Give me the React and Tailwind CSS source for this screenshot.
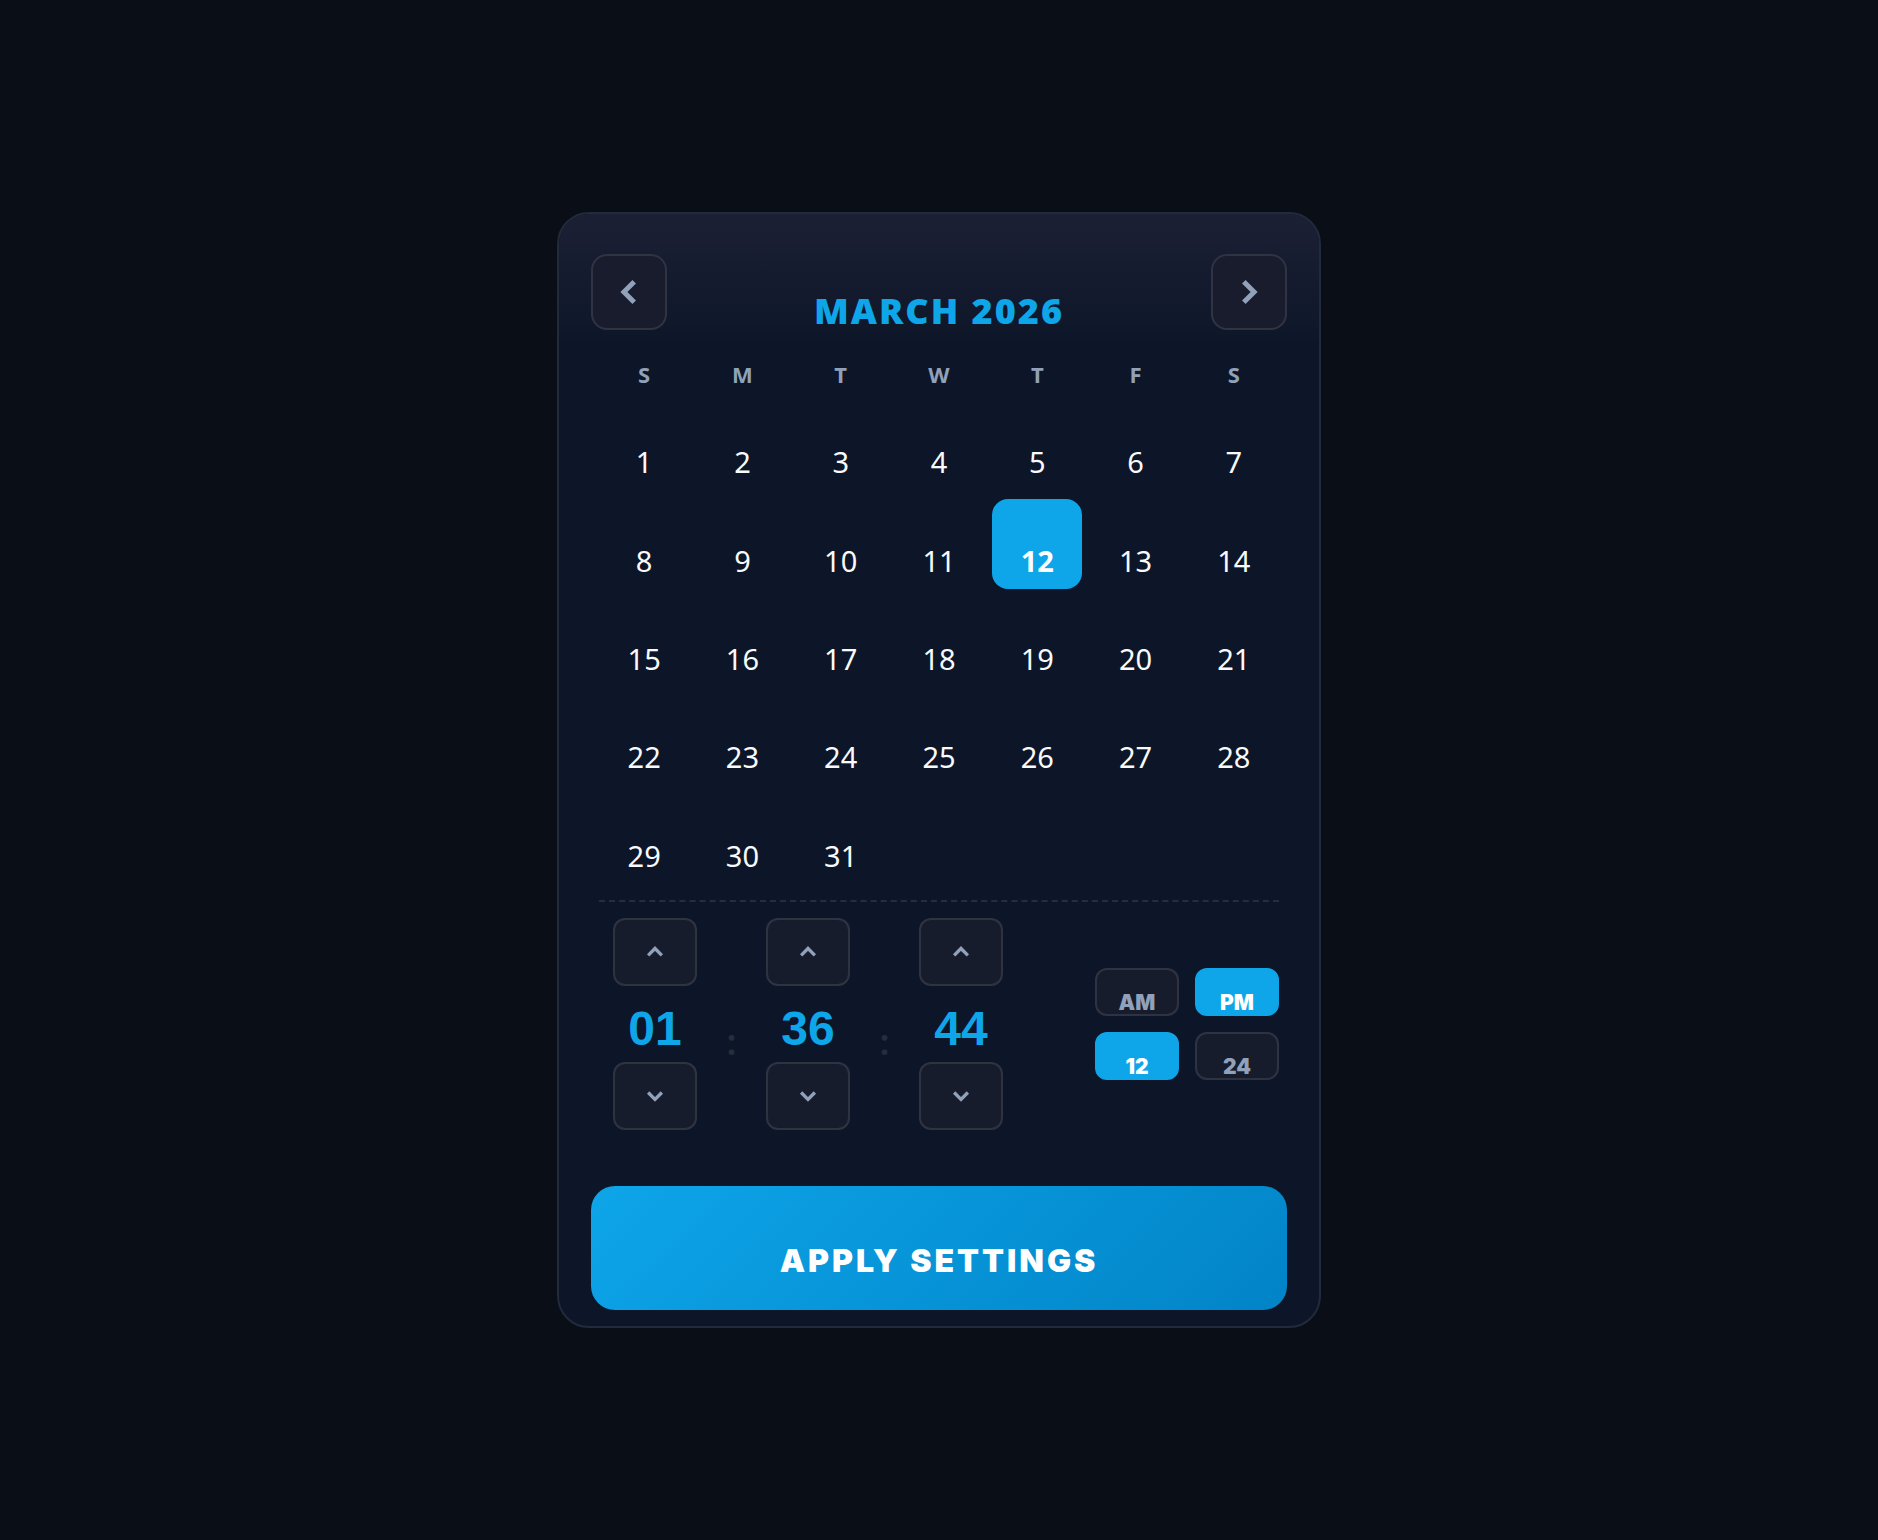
import { useState } from "react";

const WEEKDAYS = ["S", "M", "T", "W", "T", "F", "S"];
const DAYS = Array.from({ length: 31 }, (_, i) => i + 1);

const ICONS = {
  left: "M14.6 6.85L9.45 12l5.15 5.15",
  right: "M9.4 6.85L14.55 12 9.4 17.15",
  up: "M6.85 14.5L12 9.35l5.15 5.15",
  down: "M6.85 9.4L12 14.55l5.15-5.15",
};

function Icon({ name, className }) {
  return (
    <svg
      viewBox="0 0 24 24"
      fill="none"
      stroke="currentColor"
      strokeWidth="2.5"
      aria-hidden="true"
      className={className}
    >
      <path d={ICONS[name]} />
    </svg>
  );
}

function NavButton({ icon, label }) {
  return (
    <button
      type="button"
      aria-label={label}
      className="flex size-[76px] shrink-0 items-center justify-center rounded-2xl border-2 border-white/10 bg-[#181c2d] text-slate-400"
    >
      <Icon name={icon} className="size-12" />
    </button>
  );
}

function StepButton({ icon, label }) {
  return (
    <button
      type="button"
      aria-label={label}
      className="flex h-[68px] w-full items-center justify-center rounded-xl border-2 border-white/10 bg-[#171c2c] text-slate-400"
    >
      <Icon name={icon} className="size-8" />
    </button>
  );
}

function TimeColumn({ value, unit }) {
  return (
    <div className="flex w-[84px] flex-col items-center">
      <StepButton icon="up" label={`Increase ${unit}`} />
      <output
        aria-label={unit}
        className="flex h-[76px] items-center pt-2.5 font-['Liberation_Sans',Arial,sans-serif] text-5xl font-bold text-[#0ea5e9]"
      >
        {value}
      </output>
      <StepButton icon="down" label={`Decrease ${unit}`} />
    </div>
  );
}

function Colon() {
  return (
    <span className="w-[69px] pt-9 text-center text-4xl font-semibold text-white/10">:</span>
  );
}

function Toggle({ active, onClick, children }) {
  const tone = active
    ? "border-[#0ea5e9] bg-[#0ea5e9] text-white"
    : "border-white/10 bg-[#171c2c] text-slate-400";
  return (
    <button
      type="button"
      aria-pressed={active}
      onClick={onClick}
      className={`flex h-12 w-[84px] items-end justify-center rounded-xl border-2 font-[Inter,sans-serif] text-[21px] leading-[22px] font-black ${tone}`}
    >
      {children}
    </button>
  );
}

export default function App() {
  const [selected, setSelected] = useState(12);
  const [period, setPeriod] = useState("PM");
  const [clock, setClock] = useState("12");

  return (
    <main className="flex min-h-screen items-center justify-center bg-[#0a0e17] font-['Noto_Sans',sans-serif]">
      <section className="w-full max-w-[764px] overflow-hidden rounded-[32px] border-2 border-[#222b3b] bg-[#0d1628]">
        <header className="flex items-start justify-between bg-linear-to-b from-[#1c2035] to-[#0d1628] px-8 pt-10 pb-4">
          <NavButton icon="left" label="Previous month" />
          <h2 className="pt-[39px] font-['Open_Sans',sans-serif] text-4xl leading-9 font-extrabold tracking-[2px] text-[#0ea5e9]">
            MARCH 2026
          </h2>
          <NavButton icon="right" label="Next month" />
        </header>

        <div className="px-10">
          <div className="grid grid-cols-7 gap-2 pt-3 pb-2.5">
            {WEEKDAYS.map((day, i) => (
              <span key={i} className="text-center text-[22px] leading-8 font-bold text-slate-400">
                {day}
              </span>
            ))}
          </div>

          <div className="grid grid-cols-7 gap-2">
            {DAYS.map((day) => (
              <button
                key={day}
                type="button"
                aria-pressed={day === selected}
                onClick={() => setSelected(day)}
                className={`flex aspect-square items-center justify-center rounded-2xl pt-8.5 text-[29px] leading-9 ${
                  day === selected ? "bg-[#0ea5e9] font-bold text-white" : "text-slate-50"
                }`}
              >
                {day}
              </button>
            ))}
          </div>

          <div className="mt-4 flex items-center justify-between border-t-2 border-dashed border-white/10 pt-4">
            <div className="flex items-center pl-3.5">
              <TimeColumn value="01" unit="hours" />
              <Colon />
              <TimeColumn value="36" unit="minutes" />
              <Colon />
              <TimeColumn value="44" unit="seconds" />
            </div>
            <div className="grid grid-cols-2 gap-4">
              <Toggle active={period === "AM"} onClick={() => setPeriod("AM")}>AM</Toggle>
              <Toggle active={period === "PM"} onClick={() => setPeriod("PM")}>PM</Toggle>
              <Toggle active={clock === "12"} onClick={() => setClock("12")}>12</Toggle>
              <Toggle active={clock === "24"} onClick={() => setClock("24")}>24</Toggle>
            </div>
          </div>
        </div>

        <footer className="px-8 pt-14 pb-4">
          <button
            type="button"
            className="flex h-[124px] w-full items-center justify-center rounded-3xl bg-linear-135 from-[#0ea5e9] to-[#0284c7] pt-6.5 font-[Inter,sans-serif] text-[32px] font-black tracking-[3px] text-white"
          >
            APPLY SETTINGS
          </button>
        </footer>
      </section>
    </main>
  );
}
